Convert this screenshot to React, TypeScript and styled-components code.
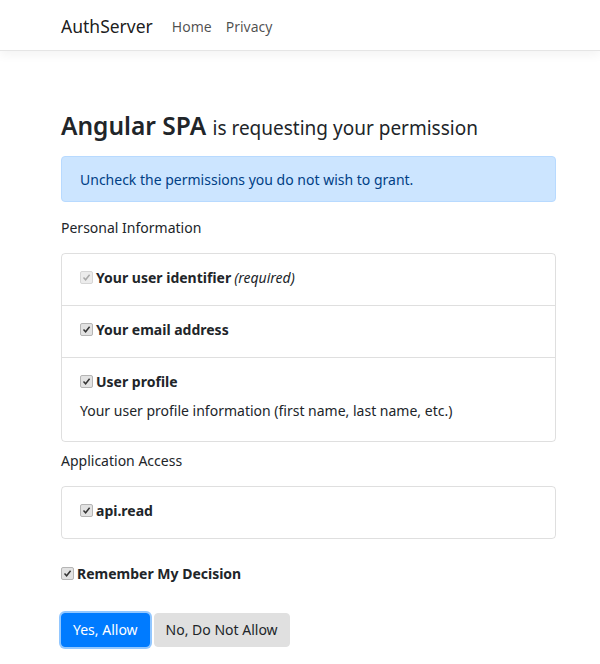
import React from "react";
import styled, { createGlobalStyle } from "styled-components";

const colors = {
  text: "#212529",
  navText: "rgba(0, 0, 0, 0.7)",
  border: "rgba(0, 0, 0, 0.125)",
  alertBg: "#cce5ff",
  alertBorder: "#b8daff",
  alertText: "#004085",
  primary: "#007bff",
  gray: "#e0e0e0",
  white: "#fff",
};

const GlobalStyle = createGlobalStyle`
  body {
    margin: 0;
    background: ${colors.white};
    color: ${colors.text};
    font-family: "Noto Sans", "DejaVu Sans", sans-serif;
    font-size: 14px;
    line-height: 1.5;
  }
`;

const Navbar = styled.nav`
  height: 50px;
  border-bottom: 1px solid #e5e5e5;
  box-shadow: 0 4px 10px rgba(0, 0, 0, 0.05);
  display: flex;
  align-items: center;
  padding-left: 61px;
`;

const Brand = styled.a`
  font-size: 17.5px;
  color: rgba(0, 0, 0, 0.9);
  margin-right: 12px;
  padding-top: 2px;
`;

const NavLink = styled.a`
  color: ${colors.navText};
  font-size: 14px;
  padding: 2px 7px 0;
`;

const Main = styled.main`
  width: 495px;
  padding: 58px 0 20px 61px;
`;

const Heading = styled.h2`
  margin: 0 0 11px;
  font-size: 24.5px;
  font-weight: 600;
  line-height: 34px;
`;

const Small = styled.small`
  font-size: 19px;
  font-weight: 400;
`;

const Alert = styled.div`
  background: ${colors.alertBg};
  border: 1px solid ${colors.alertBorder};
  color: ${colors.alertText};
  border-radius: 4px;
  padding: 12px 18px 11px;
  margin-bottom: 15px;
`;

const SectionTitle = styled.div`
  margin-bottom: 15px;
`;

const Card = styled.ul`
  list-style: none;
  margin: 0 0 8px;
  padding: 0;
  border: 1px solid ${colors.border};
  border-radius: 4px;
`;

const Item = styled.li`
  padding: 13px 18px 17px;
  & + & {
    border-top: 1px solid ${colors.border};
  }
`;

const Label = styled.label`
  display: flex;
  align-items: center;
  gap: 3px;
  font-weight: 700;
`;

const Required = styled.em`
  font-weight: 400;
`;

const Description = styled.div`
  margin: 8px 0 3px;
`;

const Box = styled.span<{ $disabled?: boolean }>`
  width: 11px;
  height: 11px;
  border-radius: 2px;
  background: ${(p) => (p.$disabled ? "#ececec" : "#e2e2e2")};
  border: 1px solid ${(p) => (p.$disabled ? "#d6d6d6" : "#b5b5b5")};
  display: inline-flex;
  align-items: center;
  justify-content: center;
  flex-shrink: 0;
`;

const Remember = styled(Label)`
  margin: 24px 0 29px;
`;

const Actions = styled.div`
  display: flex;
  gap: 4px;
`;

const Button = styled.button<{ $primary?: boolean }>`
  font-family: inherit;
  font-size: 14px;
  line-height: 22px;
  padding: 5px 11px;
  border-radius: 4px;
  border: 1px solid ${(p) => (p.$primary ? colors.primary : colors.gray)};
  background: ${(p) => (p.$primary ? colors.primary : colors.gray)};
  color: ${(p) => (p.$primary ? colors.white : colors.text)};
  box-shadow: ${(p) => (p.$primary ? "0 0 0 2px rgba(38, 143, 255, 0.5)" : "none")};
`;

const Check = ({ disabled }: { disabled?: boolean }) => (
  <Box $disabled={disabled}>
    <svg width="9" height="9" viewBox="0 0 9 9">
      <path
        d="M1.5 4.6 L3.6 6.8 L7.6 1.8"
        fill="none"
        stroke={disabled ? "#a8a8a8" : "#333"}
        strokeWidth="1.5"
      />
    </svg>
  </Box>
);

const Scope = ({
  name,
  required,
  description,
}: {
  name: string;
  required?: boolean;
  description?: string;
}) => (
  <Item>
    <Label>
      <Check disabled={required} />
      {name}
      {required && <Required>(required)</Required>}
    </Label>
    {description && <Description>{description}</Description>}
  </Item>
);

export default function App() {
  return (
    <>
      <GlobalStyle />
      <Navbar>
        <Brand>AuthServer</Brand>
        <NavLink>Home</NavLink>
        <NavLink>Privacy</NavLink>
      </Navbar>
      <Main>
        <Heading>
          Angular SPA <Small>is requesting your permission</Small>
        </Heading>
        <Alert>Uncheck the permissions you do not wish to grant.</Alert>
        <SectionTitle>Personal Information</SectionTitle>
        <Card>
          <Scope name="Your user identifier" required />
          <Scope name="Your email address" />
          <Scope
            name="User profile"
            description="Your user profile information (first name, last name, etc.)"
          />
        </Card>
        <SectionTitle>Application Access</SectionTitle>
        <Card>
          <Scope name="api.read" />
        </Card>
        <Remember as="div">
          <Check />
          Remember My Decision
        </Remember>
        <Actions>
          <Button $primary>Yes, Allow</Button>
          <Button>No, Do Not Allow</Button>
        </Actions>
      </Main>
    </>
  );
}
